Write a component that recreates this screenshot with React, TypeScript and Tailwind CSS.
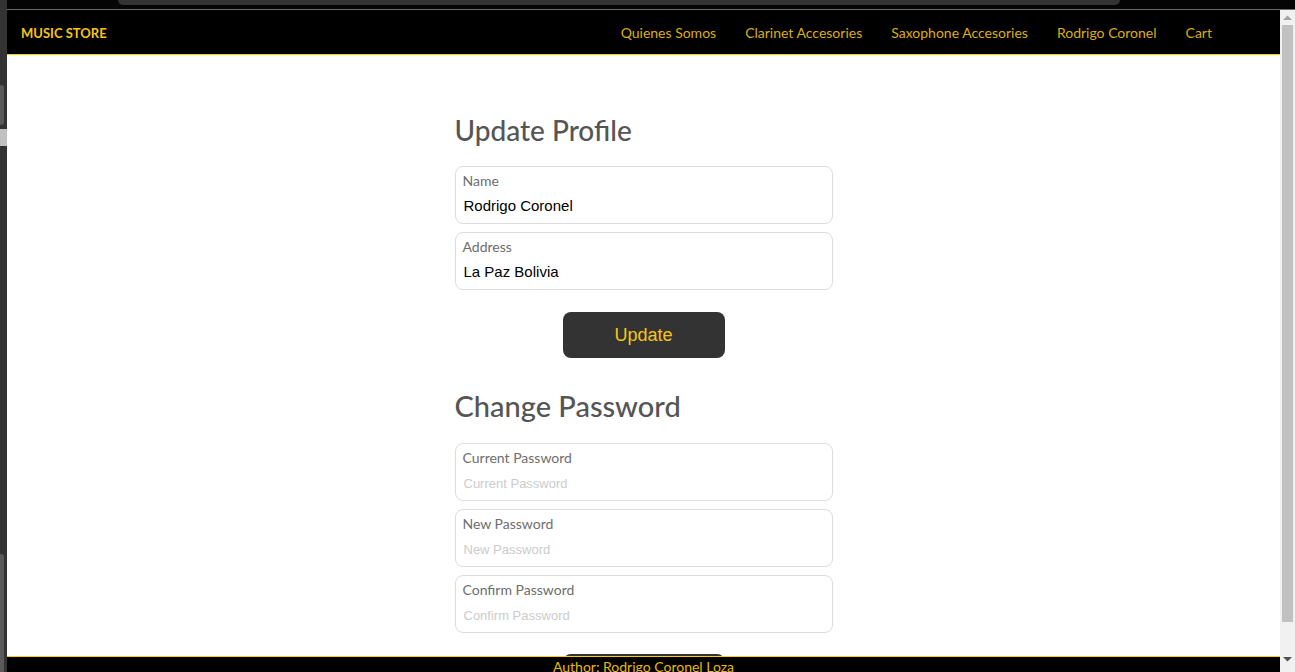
import React from "react"

const uiFont = { fontFamily: "Lato, 'Noto Sans', sans-serif" }

function Field({ label, value, placeholder }: { label: string; value?: string; placeholder?: string }) {
  return (
    <div className="mb-2 flex h-[58px] flex-col rounded-[8px] border border-[#dddddd] px-[7px] pt-[6px]">
      <label className="text-[14px] leading-[16px] text-[#6e6e6e]" style={uiFont}>
        {label}
      </label>
      <input
        type={value ? "text" : "password"}
        defaultValue={value}
        placeholder={placeholder}
        className="mt-[4px] h-[24px] bg-transparent pl-[1px] font-['Liberation_Sans',Arial,sans-serif] text-[15px] text-black outline-none placeholder:text-[13px] placeholder:text-[#cccccc]"
      />
    </div>
  )
}

function Button({ children, label }: { children?: React.ReactNode; label?: string }) {
  return (
    <button
      aria-label={label}
      className="mx-auto block h-[46px] w-[162px] rounded-[8px] bg-[#333333] font-['Liberation_Sans',Arial,sans-serif] text-[18px] text-[#f5c518]"
    >
      {children}
    </button>
  )
}

export default function App() {
  const links = ["Quienes Somos", "Clarinet Accesories", "Saxophone Accesories", "Rodrigo Coronel", "Cart"]

  return (
    <div className="flex h-[672px] w-[1295px] overflow-hidden bg-black">
      {/* left edge of the desktop */}
      <div className="flex w-[7px] shrink-0 flex-col bg-[#333333]">
        <div className="mt-[85px] h-[40px] w-[4px] shrink-0 rounded-r-[3px] bg-[#5a5a5a]" />
        <div className="mt-[4px] h-[17px] w-[7px] shrink-0 bg-[#c0c0c0]" />
        <div className="mt-[408px] h-[130px] w-[4px] shrink-0 rounded-r-[3px] bg-[#5a5a5a]" />
      </div>

      <div className="flex min-h-0 flex-1 flex-col">
        {/* browser top strip */}
        <div className="h-[10px] shrink-0 border-b border-[#6a6a6a] bg-[#050505]">
          <div className="ml-[111px] h-[5px] w-[1002px] rounded-b-[10px] bg-[#333333]" />
        </div>

        <div className="flex min-h-0 flex-1">
          <div className="relative flex min-h-0 flex-1 flex-col overflow-hidden bg-white">
            <nav
              className="flex h-[45px] shrink-0 items-center justify-between border-b border-[#ffd000] bg-black pl-[14px] pr-[68px]"
              style={uiFont}
            >
              <span className="mt-[4px] text-[13px] font-bold text-[#f5c518]">MUSIC STORE</span>
              <div className="flex gap-[29px]">
                {links.map((l) => (
                  <a key={l} className="text-[14px] text-[#dcae10]">
                    {l}
                  </a>
                ))}
              </div>
            </nav>

            <main className="mx-auto w-[378px] shrink-0 pt-[58px]">
              <h2 className="mb-[19px] text-[28px] leading-[34px] font-medium text-[#555555]" style={uiFont}>
                Update Profile
              </h2>
              <Field label="Name" value="Rodrigo Coronel" />
              <Field label="Address" value="La Paz Bolivia" />
              <div className="mt-[22px]">
                <Button>Update</Button>
              </div>

              <h2 className="mt-[31px] mb-[20px] text-[29px] leading-[34px] font-medium text-[#555555]" style={uiFont}>
                Change Password
              </h2>
              <Field label="Current Password" placeholder="Current Password" />
              <Field label="New Password" placeholder="New Password" />
              <Field label="Confirm Password" placeholder="Confirm Password" />
              <div className="mt-[21px]">
                <Button label="Change Password" />
              </div>
            </main>

            <footer
              className="absolute bottom-0 left-0 right-0 h-[16px] overflow-hidden border-t border-[#ffd000] bg-black text-center text-[14px] leading-[18px] text-[#e8b800]"
              style={uiFont}
            >
              <div className="pt-[1px]">Author: Rodrigo Coronel Loza</div>
            </footer>
          </div>

          {/* scrollbar */}
          <div className="flex w-[15px] shrink-0 flex-col items-center bg-[#f1f1f1]">
            <svg width="9" height="6" viewBox="0 0 9 6" className="mt-[5px] shrink-0">
              <path d="M0 5 L4.5 0.5 L9 5 Z" fill="#a3a3a3" />
            </svg>
            <div className="mt-[4px] h-[597px] w-[11px] shrink-0 bg-[#c1c1c1]" />
            <svg width="9" height="6" viewBox="0 0 9 6" className="mt-[34px] shrink-0">
              <path d="M0 1 L4.5 5.5 L9 1 Z" fill="#505050" />
            </svg>
          </div>
        </div>
      </div>
    </div>
  )
}
